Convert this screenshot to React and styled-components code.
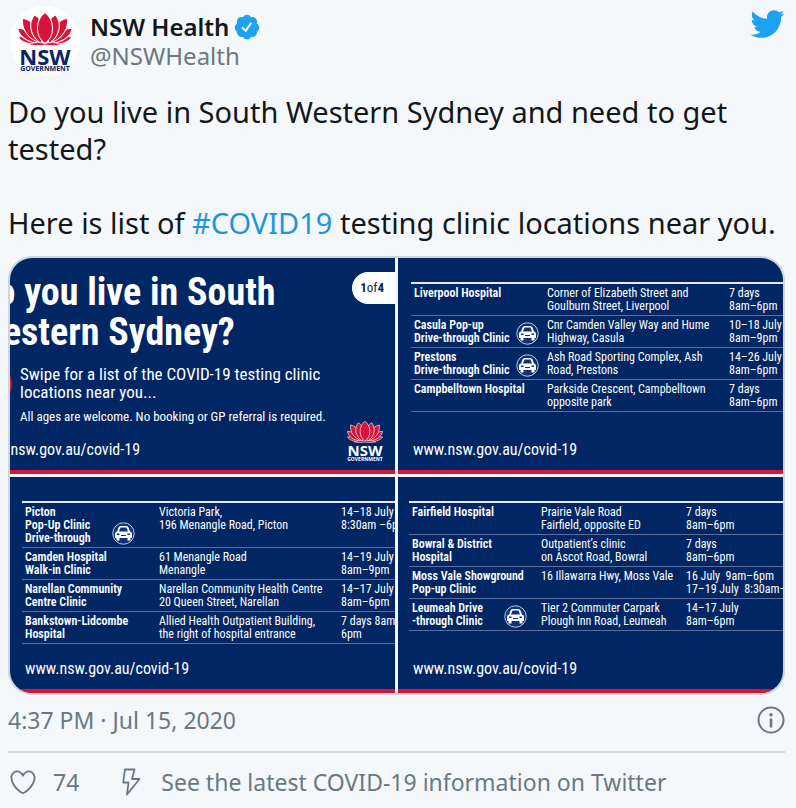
import React from "react";
import styled, { createGlobalStyle } from "styled-components";

const colors = {
  page: "#f5f8fa",
  text: "#14171a",
  muted: "#697882",
  link: "#1b95e0",
  brand: "#1da1f2",
  border: "#ccd6dd",
  navy: "#002664",
  red: "#d7153a",
  rule: "#5c6c9c",
};

const fonts = {
  body: `"Noto Sans", "Open Sans", sans-serif`,
  slide: `"Roboto Condensed", "Liberation Sans Narrow", "Roboto", sans-serif`,
};

const GlobalStyle = createGlobalStyle`
  * {
    box-sizing: border-box;
  }
  body {
    margin: 0;
    background: ${colors.page};
    color: ${colors.text};
    font-family: ${fonts.body};
  }
  a {
    color: inherit;
    text-decoration: none;
  }
  svg {
    display: block;
    flex-shrink: 0;
  }
`;

const Tweet = styled.article`
  padding: 6px 11px 0 8px;
`;

const Header = styled.header`
  display: flex;
  align-items: flex-start;
  justify-content: space-between;
`;

const Author = styled.a`
  display: flex;
  gap: 10px;
  padding-left: 2px;
`;

const Avatar = styled.span`
  display: flex;
  justify-content: center;
  width: 70px;
  height: 70px;
  padding-top: 6px;
  border-radius: 50%;
  background: #fff;
`;

const AuthorText = styled.span`
  display: flex;
  flex-direction: column;
  padding-top: 6px;
  font-size: 24px;
  line-height: 29px;
`;

const Name = styled.span`
  display: flex;
  align-items: center;
  gap: 4px;
  font-weight: 600;
`;

const Handle = styled.span`
  color: ${colors.muted};
`;

const Logo = styled.span`
  display: flex;
  flex-direction: column;
  align-items: center;
  color: ${(props) => (props.$inverse ? "#fff" : "#0a2463")};
  font-family: "Open Sans", sans-serif;
  font-weight: 700;
`;

const LogoName = styled.span`
  font-size: ${(props) => (props.$inverse ? 15 : 22)}px;
  line-height: ${(props) => (props.$inverse ? 14 : 20)}px;
`;

const LogoCaption = styled.span`
  font-size: ${(props) => (props.$inverse ? 5 : 7)}px;
  line-height: ${(props) => (props.$inverse ? 4 : 6)}px;
`;

const Message = styled.p`
  margin: 17px 0 15px;
  font-size: 29px;
  line-height: 37px;
  white-space: pre-line;
`;

const Hashtag = styled.a`
  color: ${colors.link};
`;

const Gallery = styled.section`
  display: grid;
  grid-template-columns: 1fr 1fr;
  gap: 3px;
  overflow: hidden;
  border: 2px solid ${colors.border};
  border-radius: 24px;
  color: #fff;
  font-family: ${fonts.slide};
`;

const Slide = styled.div`
  display: flex;
  flex-direction: column;
  position: relative;
  min-width: 0;
  min-height: 216px;
  overflow: hidden;
  background: ${colors.navy};
  border-bottom: 4px solid ${colors.red};
  white-space: nowrap;
`;

const Headline = styled.h2`
  margin: 14px 0 0 -35px;
  font-size: 38px;
  font-weight: 700;
  line-height: 40px;
`;

const Intro = styled.div`
  display: flex;
  gap: 8px;
  margin: 13px 0 0 -36px;
`;

const SwipeDot = styled.span`
  width: 38px;
  height: 38px;
  border-radius: 50%;
  background: ${colors.red};
`;

const IntroText = styled.p`
  margin: 0;
  font-size: 17px;
  line-height: 18px;
`;

const Note = styled.p`
  margin: 5px 0 0 10px;
  font-size: 13px;
  line-height: 18px;
`;

const Counter = styled.span`
  position: absolute;
  top: 14px;
  right: 0;
  padding: 0 11px 0 8px;
  border-radius: 16px 0 0 16px;
  background: #fff;
  color: ${colors.navy};
  font-size: 13px;
  line-height: 32px;
`;

const LogoCorner = styled.span`
  position: absolute;
  right: 12px;
  bottom: 9px;
`;

const SlideLink = styled.a`
  margin: auto 0 10px ${(props) => props.$indent}px;
  font-size: 16px;
  line-height: 20px;
`;

const ClinicTable = styled.table`
  width: calc(100% - ${(props) => props.$indent}px);
  margin: 24px 0 0 ${(props) => props.$indent}px;
  border-top: 2px solid #e8ebf2;
  border-spacing: 0;
  table-layout: fixed;
  font-size: 12px;
  line-height: 13px;
`;

const Column = styled.col`
  width: ${(props) => (props.$width ? `${props.$width}px` : "auto")};
`;

const Cell = styled.td`
  padding: 3px 0 2px;
  border-bottom: 1px solid ${colors.rule};
  font-weight: 400;
  vertical-align: top;
  white-space: pre;
`;

const NameCell = styled(Cell).attrs({ as: "th", scope: "row" })`
  padding-left: 3px;
  font-weight: 600;
  text-align: left;
`;

const NameRow = styled.div`
  display: flex;
  align-items: flex-end;
  justify-content: space-between;
  padding-right: ${(props) => props.$inset}px;
`;

const Meta = styled.div`
  display: flex;
  align-items: center;
  justify-content: space-between;
  padding: 9px 0 15px;
  border-bottom: 2px solid ${colors.border};
  color: ${colors.muted};
  font-size: 23px;
  line-height: 32px;
`;

const Actions = styled.footer`
  display: flex;
  align-items: center;
  gap: 37px;
  padding-top: 13px;
  color: ${colors.muted};
  font-size: 23px;
  line-height: 32px;
`;

const LikeButton = styled.button`
  display: flex;
  align-items: center;
  gap: 15px;
  padding: 0;
  border: 0;
  background: none;
  color: inherit;
  font: inherit;
`;

const InfoLink = styled.a`
  display: flex;
  align-items: center;
  gap: 15px;
`;

// one half of the flower, mirrored for the other side
const petals = [
  "M0 74C12 92 40 98 70 97 62 80 30 68 0 74z",
  "M0 48C4 74 30 90 66 94 62 68 34 50 0 48z",
  "M15 18C10 50 30 80 66 92 74 60 50 28 15 18z",
  "M50 8C30 34 36 70 68 93 90 66 80 26 50 8z",
];

const Waratah = ({ width }) => (
  <svg width={width} viewBox="-2 0 166 100" aria-hidden="true">
    <g fill={colors.red} stroke="#fff" strokeWidth="3" strokeLinejoin="round">
      {petals.map((d) => (
        <React.Fragment key={d}>
          <path d={d} />
          <path d={d} transform="translate(162 0) scale(-1 1)" />
        </React.Fragment>
      ))}
      <path d="M81 94C50 70 52 24 81 1c29 23 31 69 0 93z" />
      <path d="M32 97c18-8 36-8 49-3 13-5 31-5 49 3-18 3-36 3-49 1-13 2-31 2-49-1z" strokeWidth="2" />
    </g>
  </svg>
);

const NswLogo = ({ inverse }) => (
  <Logo $inverse={inverse}>
    <Waratah width={inverse ? 36 : 56} />
    <LogoName $inverse={inverse}>NSW</LogoName>
    <LogoCaption $inverse={inverse}>GOVERNMENT</LogoCaption>
  </Logo>
);

const VerifiedIcon = () => (
  <svg width="28" height="28" viewBox="0 0 24 24" role="img" aria-label="Verified">
    <path
      fill={colors.brand}
      d="M22.5 12.5c0-1.58-.875-2.95-2.148-3.6.154-.435.238-.905.238-1.4 0-2.21-1.71-3.998-3.818-3.998-.47 0-.92.084-1.336.25C14.818 2.415 13.51 1.5 12 1.5s-2.816.917-3.437 2.25c-.415-.165-.866-.25-1.336-.25-2.11 0-3.818 1.79-3.818 4 0 .494.083.964.237 1.4-1.272.65-2.147 2.018-2.147 3.6 0 1.495.782 2.798 1.942 3.486-.02.17-.032.34-.032.514 0 2.21 1.708 4 3.818 4 .47 0 .92-.086 1.335-.25.62 1.334 1.926 2.25 3.437 2.25 1.512 0 2.818-.916 3.437-2.25.415.163.865.248 1.336.248 2.11 0 3.818-1.79 3.818-4 0-.174-.012-.344-.033-.513 1.158-.687 1.943-1.99 1.943-3.484z"
    />
    <path d="M8.2 12.7l2.7 2.6 4.4-6.4" fill="none" stroke="#fff" strokeWidth="1.6" strokeLinecap="round" />
  </svg>
);

const TwitterIcon = () => (
  <svg width="36" height="36" viewBox="0 0 24 24" fill={colors.brand} role="img" aria-label="Twitter">
    <path d="M23.643 4.937c-.835.37-1.732.62-2.675.733.962-.576 1.7-1.49 2.048-2.578-.9.534-1.897.922-2.958 1.13-.85-.904-2.06-1.47-3.4-1.47-2.572 0-4.658 2.086-4.658 4.66 0 .364.042.718.12 1.06-3.873-.195-7.304-2.05-9.602-4.868-.4.69-.63 1.49-.63 2.342 0 1.616.823 3.043 2.072 3.878-.764-.025-1.482-.234-2.11-.583v.06c0 2.257 1.605 4.14 3.737 4.568-.392.106-.803.162-1.227.162-.3 0-.593-.028-.877-.082.593 1.85 2.313 3.198 4.352 3.234-1.595 1.25-3.604 1.995-5.786 1.995-.376 0-.747-.022-1.112-.065 2.062 1.323 4.51 2.093 7.14 2.093 8.57 0 13.255-7.098 13.255-13.254 0-.2-.005-.402-.014-.602.91-.658 1.7-1.477 2.323-2.41z" />
  </svg>
);

const CarIcon = () => (
  <svg width="23" height="23" viewBox="0 0 46 46" aria-hidden="true">
    <circle cx="23" cy="23" r="21.500" fill="#0d3477" stroke="#c3cbe0" strokeWidth="2" />
    <path
      fill="#fff"
      fillRule="evenodd"
      d="M13 11q1-3 4-3h12q3 0 4 3l3 8q4 1 4 4v9h-3v5h-6v-5H15v5H9v-5H6v-9q0-3 4-4zm4 0-3 8h18l-3-8zM10 23v3h5v-3zm21 0v3h5v-3zm-13 3v2h10v-2z"
    />
  </svg>
);

const HeartIcon = () => (
  <svg width="30" height="30" viewBox="0 0 24 24" fill="currentColor" aria-hidden="true">
    <path d="M12 21.638h-.014C9.403 21.59 1.95 14.856 1.95 8.478c0-3.064 2.525-5.754 5.403-5.754 2.29 0 3.83 1.58 4.646 2.73.814-1.148 2.354-2.73 4.645-2.73 2.88 0 5.404 2.69 5.404 5.755 0 6.376-7.454 13.11-10.037 13.157H12zM7.354 4.225c-2.08 0-3.903 1.988-3.903 4.255 0 5.74 7.034 11.596 8.55 11.658 1.518-.062 8.55-5.917 8.55-11.658 0-2.267-1.823-4.255-3.903-4.255-2.528 0-3.94 2.936-3.952 2.965-.23.562-1.156.562-1.387 0-.014-.03-1.425-2.965-3.954-2.965z" />
  </svg>
);

const BoltIcon = () => (
  <svg width="30" height="30" viewBox="0 0 30 30" aria-hidden="true">
    <path
      d="M9 2.500h9.500L16 12h7.500L11 27.500l1.500-12H7.200z"
      fill="none"
      stroke="currentColor"
      strokeWidth="1.800"
      strokeLinejoin="round"
    />
  </svg>
);

const InfoIcon = () => (
  <svg width="28" height="28" viewBox="0 0 28 28" role="img" aria-label="Information">
    <circle cx="14" cy="14" r="12.500" fill="none" stroke="currentColor" strokeWidth="2" />
    <circle cx="14" cy="8.800" r="1.700" fill="currentColor" />
    <path d="M14 13.500v7" stroke="currentColor" strokeWidth="2.600" strokeLinecap="round" />
  </svg>
);

const liverpool = {
  indent: 13,
  columns: [136, 182],
  iconInset: 8,
  rows: [
    { name: "Liverpool Hospital", address: "Corner of Elizabeth Street and\nGoulburn Street, Liverpool", time: "7 days\n8am–6pm" },
    { name: "Casula Pop-up\nDrive-through Clinic", car: true, address: "Cnr Camden Valley Way and Hume\nHighway, Casula", time: "10–18 July\n8am–9pm" },
    { name: "Prestons\nDrive-through Clinic", car: true, address: "Ash Road Sporting Complex, Ash\nRoad, Prestons", time: "14–26 July\n8am–6pm" },
    { name: "Campbelltown Hospital", address: "Parkside Crescent, Campbelltown\nopposite park", time: "7 days\n8am–6pm" },
  ],
};

const picton = {
  indent: 12,
  columns: [137, 182],
  iconInset: 24,
  rows: [
    { name: "Picton\nPop-Up Clinic\nDrive-through", car: true, address: "Victoria Park,\n196 Menangle Road, Picton", time: "14–18 July\n8:30am –6pm" },
    { name: "Camden Hospital\nWalk-in Clinic", address: "61 Menangle Road\nMenangle", time: "14–19 July\n8am–9pm" },
    { name: "Narellan Community\nCentre Clinic", address: "Narellan Community Health Centre\n20 Queen Street, Narellan", time: "14–17 July\n8am–6pm" },
    { name: "Bankstown-Lidcombe\nHospital", address: "Allied Health Outpatient Building,\nthe right of hospital entrance", time: "7 days 8am–\n6pm" },
  ],
};

const fairfield = {
  indent: 11,
  columns: [132, 145],
  iconInset: 14,
  rows: [
    { name: "Fairfield Hospital", address: "Prairie Vale Road\nFairfield, opposite ED", time: "7 days\n8am–6pm" },
    { name: "Bowral & District\nHospital", address: "Outpatient’s clinic\non Ascot Road, Bowral", time: "7 days\n8am–6pm" },
    { name: "Moss Vale Showground\nPop-up Clinic", address: "16 Illawarra Hwy, Moss Vale", time: "16 July  9am–6pm\n17–19 July  8:30am–6pm" },
    { name: "Leumeah Drive\n-through Clinic", car: true, address: "Tier 2 Commuter Carpark\nPlough Inn Road, Leumeah", time: "14–17 July\n8am–6pm" },
  ],
};

const ClinicSlide = ({ indent, columns, iconInset, rows }) => (
  <Slide>
    <ClinicTable $indent={indent}>
      <colgroup>
        <Column $width={columns[0]} />
        <Column $width={columns[1]} />
        <Column />
      </colgroup>
      <tbody>
        {rows.map((row) => (
          <tr key={row.name}>
            <NameCell>
              <NameRow $inset={iconInset}>
                {row.name}
                {row.car && <CarIcon />}
              </NameRow>
            </NameCell>
            <Cell>{row.address}</Cell>
            <Cell>{row.time}</Cell>
          </tr>
        ))}
      </tbody>
    </ClinicTable>
    <SlideLink href="#covid-19" $indent={15}>
      www.nsw.gov.au/covid-19
    </SlideLink>
  </Slide>
);

const App = () => {
  return (
    <>
      <GlobalStyle />
      <Tweet>
        <Header>
          <Author href="#nswhealth">
            <Avatar>
              <NswLogo />
            </Avatar>
            <AuthorText>
              <Name>
                NSW Health
                <VerifiedIcon />
              </Name>
              <Handle>@NSWHealth</Handle>
            </AuthorText>
          </Author>
          <a href="#twitter">
            <TwitterIcon />
          </a>
        </Header>
        <Message>
          {"Do you live in South Western Sydney and need to get tested?\n\nHere is list of "}
          <Hashtag href="#covid19">#COVID19</Hashtag>
          {" testing clinic locations near you."}
        </Message>
        <Gallery>
          <Slide>
            <Headline>
              Do you live in South
              <br />
              Western Sydney?
            </Headline>
            <Intro>
              <SwipeDot />
              <IntroText>
                Swipe for a list of the COVID-19 testing clinic
                <br />
                locations near you...
              </IntroText>
            </Intro>
            <Note>All ages are welcome. No booking or GP referral is required.</Note>
            <SlideLink href="#covid-19" $indent={-34}>
              www.nsw.gov.au/covid-19
            </SlideLink>
            <Counter>
              <b>1</b>of<b>4</b>
            </Counter>
            <LogoCorner>
              <NswLogo inverse />
            </LogoCorner>
          </Slide>
          <ClinicSlide {...liverpool} />
          <ClinicSlide {...picton} />
          <ClinicSlide {...fairfield} />
        </Gallery>
        <Meta>
          <time dateTime="2020-07-15T16:37">4:37 PM · Jul 15, 2020</time>
          <a href="#info">
            <InfoIcon />
          </a>
        </Meta>
        <Actions>
          <LikeButton type="button">
            <HeartIcon />
            74
          </LikeButton>
          <InfoLink href="#covid-info">
            <BoltIcon />
            See the latest COVID-19 information on Twitter
          </InfoLink>
        </Actions>
      </Tweet>
    </>
  );
};

export default App;
